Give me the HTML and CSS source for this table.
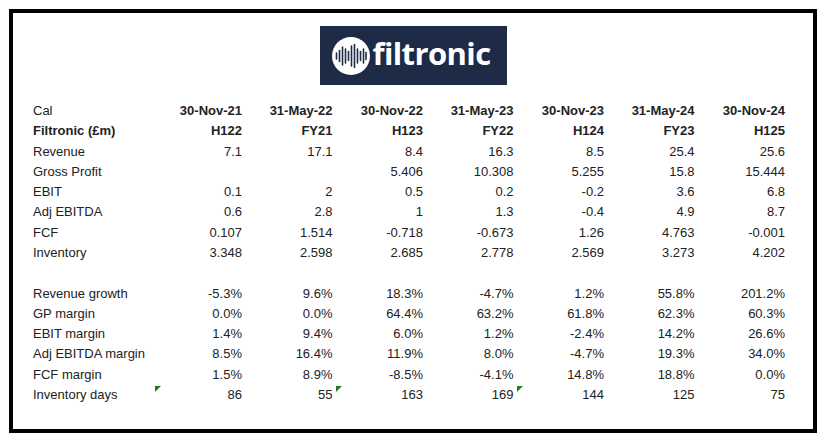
FILE: index.html
```html
<!DOCTYPE html>
<html>
<head>
<meta charset="utf-8">
<link rel="stylesheet" href="styles.css">
</head>
<body>
<div class="frame">
  <div class="logo">
    <svg class="mark" width="40" height="40" viewBox="0 0 40 40">
      <circle cx="20" cy="20" r="19" fill="#fff"/>
      <g stroke="#1d2b47" stroke-width="1.6" stroke-linecap="round">
        <line x1="5.5" y1="17" x2="5.5" y2="23"/>
        <line x1="8.5" y1="14.5" x2="8.5" y2="25.5"/>
        <line x1="11.5" y1="11" x2="11.5" y2="29"/>
        <line x1="14.5" y1="13" x2="14.5" y2="27"/>
        <line x1="17.5" y1="15.5" x2="17.5" y2="24.5"/>
        <line x1="20.5" y1="10" x2="20.5" y2="30"/>
        <line x1="23.5" y1="8.5" x2="23.5" y2="31.5"/>
        <line x1="26.5" y1="13" x2="26.5" y2="27"/>
        <line x1="29.5" y1="15.5" x2="29.5" y2="24.5"/>
        <line x1="32.5" y1="13" x2="32.5" y2="27"/>
        <line x1="35" y1="16.5" x2="35" y2="23.5"/>
      </g>
    </svg>
    <span class="word">filtronic</span>
  </div>
  <table class="data">
    <colgroup>
      <col class="c-label"><col class="c-num"><col class="c-num"><col class="c-num"><col class="c-num"><col class="c-num"><col class="c-num"><col class="c-num">
    </colgroup>
    <tr><td>Cal</td><td class="b">30-Nov-21</td><td class="b">31-May-22</td><td class="b">30-Nov-22</td><td class="b">31-May-23</td><td class="b">30-Nov-23</td><td class="b">31-May-24</td><td class="b">30-Nov-24</td></tr>
    <tr><td class="b">Filtronic (£m)</td><td class="b">H122</td><td class="b">FY21</td><td class="b">H123</td><td class="b">FY22</td><td class="b">H124</td><td class="b">FY23</td><td class="b">H125</td></tr>
    <tr><td>Revenue</td><td>7.1</td><td>17.1</td><td>8.4</td><td>16.3</td><td>8.5</td><td>25.4</td><td>25.6</td></tr>
    <tr><td>Gross Profit</td><td></td><td></td><td>5.406</td><td>10.308</td><td>5.255</td><td>15.8</td><td>15.444</td></tr>
    <tr><td>EBIT</td><td>0.1</td><td>2</td><td>0.5</td><td>0.2</td><td>-0.2</td><td>3.6</td><td>6.8</td></tr>
    <tr><td>Adj EBITDA</td><td>0.6</td><td>2.8</td><td>1</td><td>1.3</td><td>-0.4</td><td>4.9</td><td>8.7</td></tr>
    <tr><td>FCF</td><td>0.107</td><td>1.514</td><td>-0.718</td><td>-0.673</td><td>1.26</td><td>4.763</td><td>-0.001</td></tr>
    <tr><td>Inventory</td><td>3.348</td><td>2.598</td><td>2.685</td><td>2.778</td><td>2.569</td><td>3.273</td><td>4.202</td></tr>
    <tr><td></td><td></td><td></td><td></td><td></td><td></td><td></td><td></td></tr>
    <tr><td>Revenue growth</td><td>-5.3%</td><td>9.6%</td><td>18.3%</td><td>-4.7%</td><td>1.2%</td><td>55.8%</td><td>201.2%</td></tr>
    <tr><td>GP margin</td><td>0.0%</td><td>0.0%</td><td>64.4%</td><td>63.2%</td><td>61.8%</td><td>62.3%</td><td>60.3%</td></tr>
    <tr><td>EBIT margin</td><td>1.4%</td><td>9.4%</td><td>6.0%</td><td>1.2%</td><td>-2.4%</td><td>14.2%</td><td>26.6%</td></tr>
    <tr><td>Adj EBITDA margin</td><td>8.5%</td><td>16.4%</td><td>11.9%</td><td>8.0%</td><td>-4.7%</td><td>19.3%</td><td>34.0%</td></tr>
    <tr><td>FCF margin</td><td>1.5%</td><td>8.9%</td><td>-8.5%</td><td>-4.1%</td><td>14.8%</td><td>18.8%</td><td>0.0%</td></tr>
    <tr><td>Inventory days</td><td class="flag">86</td><td>55</td><td class="flag">163</td><td>169</td><td class="flag">144</td><td>125</td><td>75</td></tr>
  </table>
</div>
</body>
</html>
```
FILE: styles.css
```css
html, body {
  margin: 0;
  padding: 0;
  background: #fff;
}
.frame {
  box-sizing: border-box;
  margin: 9px 0 0 9px;
  width: 808px;
  height: 424px;
  border: 4px solid #000;
  display: flex;
  flex-direction: column;
  align-items: flex-start;
}
.logo {
  align-self: center;
  margin-top: 13px;
  width: 187px;
  height: 59px;
  box-sizing: border-box;
  background: #1d2b47;
  display: flex;
  align-items: center;
  padding-left: 11px;
  gap: 2px;
}
.mark {
  display: block;
  flex: none;
}
.word {
  color: #fff;
  font-family: "Open Sans", "Liberation Sans", sans-serif;
  font-weight: 700;
  font-size: 31px;
  letter-spacing: -0.6px;
  line-height: 1;
  margin-top: -4px;
}
.data {
  margin: 16px 0 0 16px;
  border-collapse: collapse;
  table-layout: fixed;
  width: 759.5px;
  font-family: "Liberation Sans", Arial, sans-serif;
  font-size: 13px;
  color: #222;
}
.c-label { width: 126px; }
.c-num { width: 90.5px; }
.data td {
  height: 20.27px;
  padding: 0 3.5px 0 0;
  text-align: right;
  white-space: nowrap;
  line-height: 20px;
  position: relative;
}
.data td:first-child {
  text-align: left;
  padding: 0 0 0 4px;
}
.data td.b {
  font-weight: 700;
}
.data td.flag::before {
  content: "";
  position: absolute;
  left: 0;
  top: 1px;
  width: 0;
  height: 0;
  border-top: 6px solid #1e7b1e;
  border-right: 6px solid transparent;
}
```
